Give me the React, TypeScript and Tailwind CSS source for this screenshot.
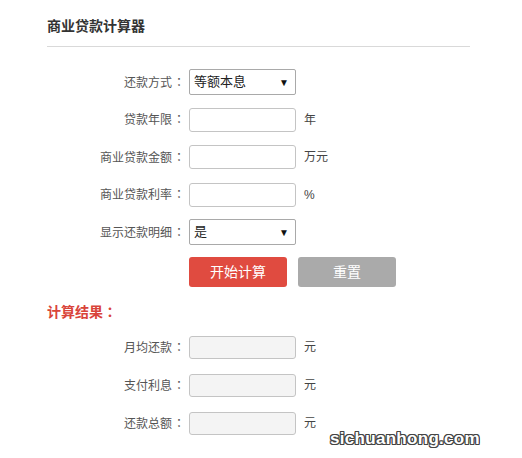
import React from 'react';

const font = { fontFamily: '"Liberation Sans", "Noto Sans CJK SC", sans-serif' };

// Form rows on top
const fields = [
    { label: '还款方式', type: 'select', value: '等额本息' },
    { label: '贷款年限', type: 'input', unit: '年' },
    { label: '商业贷款金额', type: 'input', unit: '万元' },
    { label: '商业贷款利率', type: 'input', unit: '%' },
    { label: '显示还款明细', type: 'select', value: '是' },
];

const results = ['月均还款', '支付利息', '还款总额'];

function Label({ text }: { text: string }) {
    return (
        <div className="w-[139px] text-right text-[12px] text-[#555]">
            {text}
            <span className="inline-block w-[14px] text-center" style={{ fontFamily: '"Noto Sans CJK TC", sans-serif' }}>：</span>
        </div>
    );
}

function Select({ value }: { value: string }) {
    return (
        <div className="w-[107px] h-[26px] border border-[#a9a9a9] rounded-[2px] bg-white flex items-center justify-between pl-[4px] pr-[6px]">
            <span className="text-[13px] text-[#222]">{value}</span>
            <span className="text-[10px] text-[#111]">▼</span>
        </div>
    );
}

export default function App() {
    return (
        <div className="relative w-[522px] h-[458px] bg-white" style={font}>
            <div className="pl-[47px] pt-[16px] w-[470px]">
                {/* Title */}
                <h1 className="text-[14px] font-bold text-[#333] leading-[20px]">商业贷款计算器</h1>
                <div className="mt-[10px] h-px bg-[#d9d9d9]" />

                {/* Inputs */}
                <div className="mt-[22px] flex flex-col gap-[11.5px]">
                    {fields.map((f) => (
                        <div key={f.label} className="flex items-center h-[26px]">
                            <Label text={f.label} />
                            <div className="ml-[3px]">
                                {f.type === 'select' ? (
                                    <Select value={f.value!} />
                                ) : (
                                    <div className="w-[107px] h-[24px] border border-[#c4c4c4] rounded-[3px] bg-white" />
                                )}
                            </div>
                            {f.unit && <span className="ml-[8px] text-[12px] text-[#444]">{f.unit}</span>}
                        </div>
                    ))}
                </div>

                {/* Buttons */}
                <div className="mt-[12px] ml-[142px] flex gap-[11px]">
                    <button className="w-[98px] h-[30px] rounded-[3px] bg-[#e04b40] text-white text-[14px]">开始计算</button>
                    <button className="w-[98px] h-[30px] rounded-[3px] bg-[#aaaaaa] text-white text-[14px]">重置</button>
                </div>

                {/* Results */}
                <div className="mt-[14px] text-[14px] font-bold text-[#d9443a] leading-[20px]">
                    计算结果<span style={{ fontFamily: '"Noto Sans CJK TC", sans-serif' }}>：</span>
                </div>
                <div className="mt-[12px] flex flex-col gap-[12px]">
                    {results.map((r) => (
                        <div key={r} className="flex items-center h-[26px]">
                            <Label text={r} />
                            <div className="ml-[3px] w-[107px] h-[23px] border border-[#c4c4c4] rounded-[3px] bg-[#f4f4f4]" />
                            <span className="ml-[8px] text-[12px] text-[#444]">元</span>
                        </div>
                    ))}
                </div>
            </div>

            {/* Watermark */}
            <div
                className="absolute left-[330px] top-[429px] text-[17px] font-bold text-white leading-[20px] tracking-[0.3px]"
                style={{
                    fontFamily: '"Liberation Sans", sans-serif',
                    textShadow:
                        '1px 0 0 #444, -1px 0 0 #444, 0 1px 0 #444, 0 -1px 0 #444, 1px 1px 0 #444, -1px -1px 0 #444, 1px -1px 0 #444, -1px 1px 0 #444',
                }}
            >
                sichuanhong.com
            </div>
        </div>
    );
}
